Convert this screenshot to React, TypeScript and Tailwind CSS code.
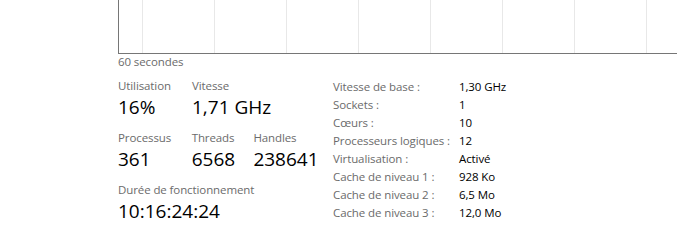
import React from "react";

const font = { fontFamily: '"Segoe UI", "Open Sans", "Noto Sans", sans-serif' };

function Stat({ label, value, w }: { label: string; value: string; w: string }) {
  return (
    <div className={`flex flex-col ${w}`}>
      <div className="text-[11.5px] tracking-[-0.1px] leading-[16px] text-[#6b6b6b] whitespace-nowrap">{label}</div>
      <div className="text-[19px] leading-[26px] text-[#000] whitespace-nowrap">{value}</div>
    </div>
  );
}

const rows: [string, string][] = [
  ["Vitesse de base :", "1,30 GHz"],
  ["Sockets :", "1"],
  ["Cœurs :", "10"],
  ["Processeurs logiques :", "12"],
  ["Virtualisation :", "Activé"],
  ["Cache de niveau 1 :", "928 Ko"],
  ["Cache de niveau 2 :", "6,5 Mo"],
  ["Cache de niveau 3 :", "12,0 Mo"],
];

export default function App() {
  const lines = [24, 96, 168, 240, 312, 384, 456, 528];
  return (
    <div className="w-[677px] h-[240px] bg-white overflow-hidden" style={font}>
      <div className="ml-[118px] h-[54px] border-l border-b border-[#767676] relative overflow-hidden">
        <svg className="absolute inset-0" width="560" height="53">
          {lines.map((x) => (
            <line key={x} x1={x - 0.5} y1={0} x2={x - 0.5} y2={53} stroke="#e8e8e8" strokeWidth={1} />
          ))}
        </svg>
      </div>
      <div className="ml-[118px] text-[11.5px] tracking-[-0.1px] leading-[16px] text-[#6b6b6b]">60 secondes</div>
      <div className="flex ml-[118px] mt-[8px]">
        <div className="flex flex-col w-[215px]">
          <div className="flex">
            <Stat label="Utilisation" value="16%" w="w-[74px]" />
            <Stat label="Vitesse" value="1,71 GHz" w="w-[100px]" />
          </div>
          <div className="flex mt-[10px]">
            <Stat label="Processus" value="361" w="w-[74px]" />
            <Stat label="Threads" value="6568" w="w-[62px]" />
            <Stat label="Handles" value="238641" w="w-[80px]" />
          </div>
          <div className="flex mt-[10px]">
            <Stat label="Durée de fonctionnement" value="10:16:24:24" w="w-[200px]" />
          </div>
        </div>
        <div className="flex flex-col text-[11.5px] tracking-[-0.1px] leading-[18px]">
          {rows.map(([k, v]) => (
            <div key={k} className="flex whitespace-nowrap">
              <div className="w-[126px] text-[#6b6b6b]">{k}</div>
              <div className="text-[#000]">{v}</div>
            </div>
          ))}
        </div>
      </div>
    </div>
  );
}
